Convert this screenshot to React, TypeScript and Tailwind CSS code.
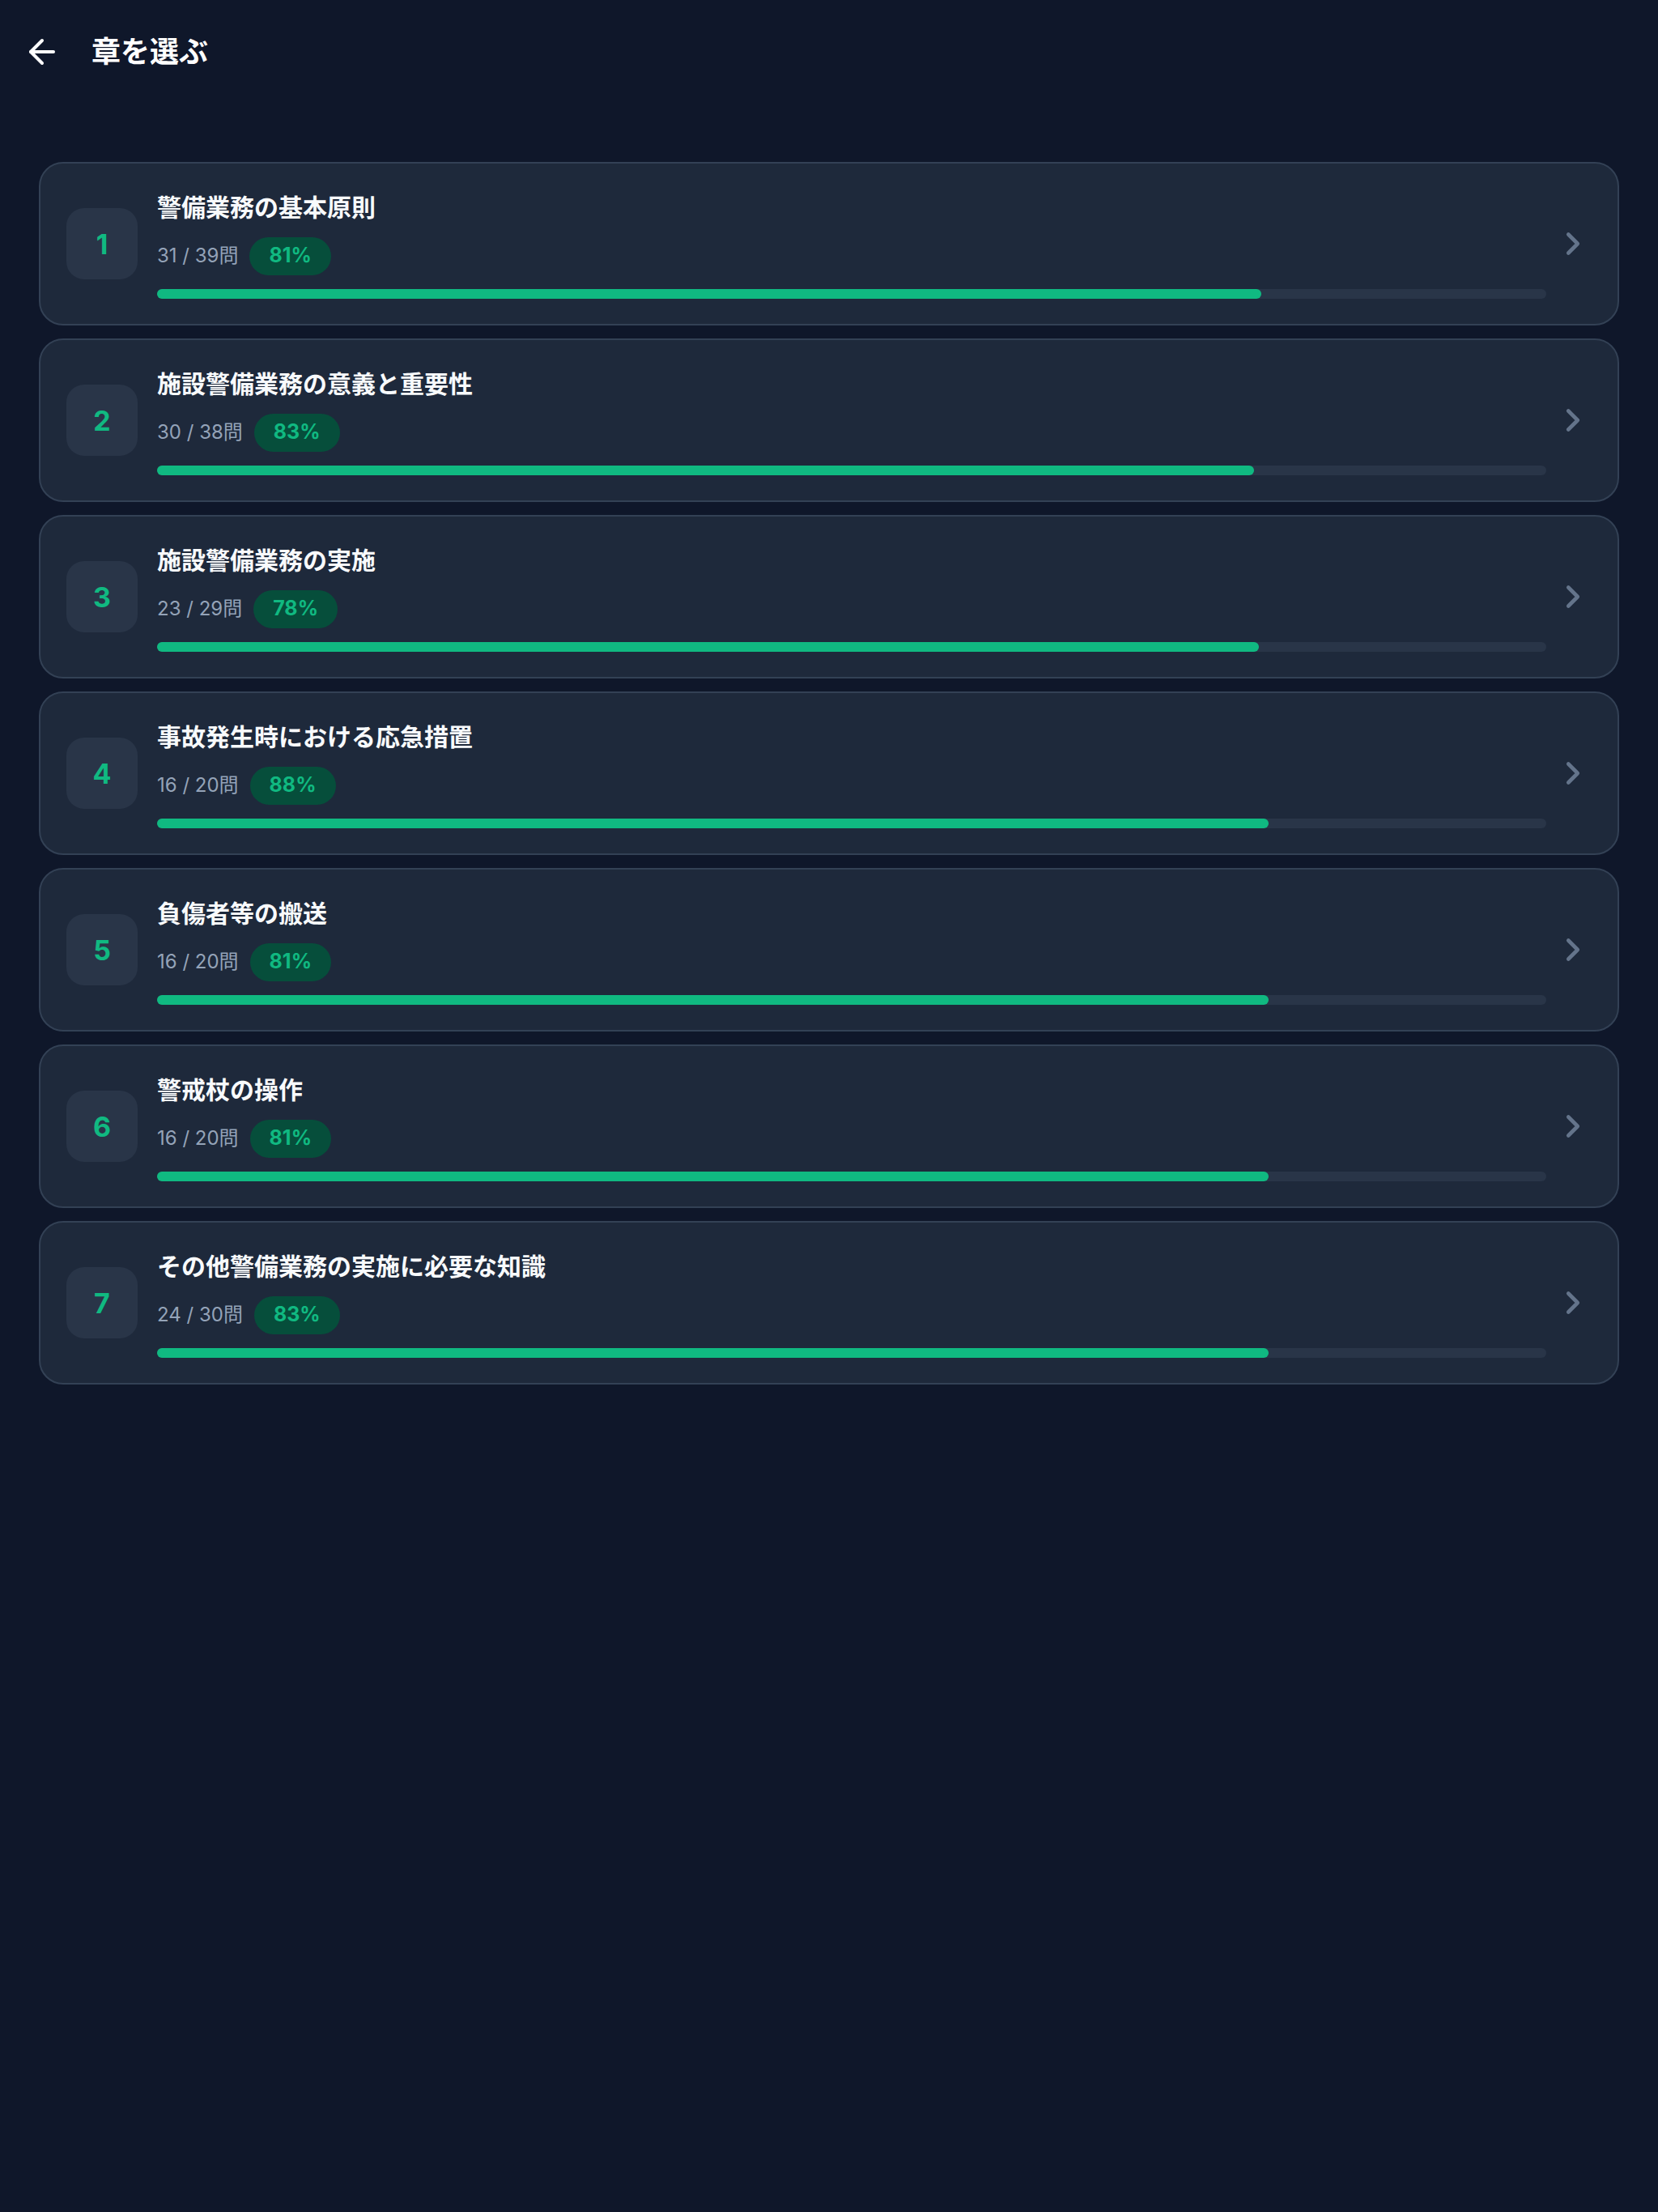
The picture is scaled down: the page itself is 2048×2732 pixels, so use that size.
import React from 'react';
import { ArrowLeft, ChevronRight } from 'lucide-react';

const chapters = [
	{ no: 1, title: '警備業務の基本原則', done: 31, total: 39, rate: 81 },
	{ no: 2, title: '施設警備業務の意義と重要性', done: 30, total: 38, rate: 83 },
	{ no: 3, title: '施設警備業務の実施', done: 23, total: 29, rate: 78 },
	{ no: 4, title: '事故発生時における応急措置', done: 16, total: 20, rate: 88 },
	{ no: 5, title: '負傷者等の搬送', done: 16, total: 20, rate: 81 },
	{ no: 6, title: '警戒杖の操作', done: 16, total: 20, rate: 81 },
	{ no: 7, title: 'その他警備業務の実施に必要な知識', done: 24, total: 30, rate: 83 },
];

function ChapterCard({ chapter }: { chapter: (typeof chapters)[number] }) {
	const progress = (chapter.done / chapter.total) * 100;
	return (
		<div className="flex h-[202px] items-center rounded-[30px] border-2 border-[#334155] bg-[#1e293b] px-[32px]">
			<div className="flex h-[88px] w-[88px] shrink-0 items-center justify-center rounded-[22px] bg-[#293548]">
				<span className="text-[34px] font-bold text-[#10b981]">{chapter.no}</span>
			</div>
			<div className="ml-[24px] flex min-w-0 flex-1 flex-col">
				<div className="text-[30px] font-bold leading-[45px] text-[#f8fafc]">
					{chapter.title}
				</div>
				<div className="mt-[14px] flex items-center gap-[14px]">
					<span className="text-[24px] text-[#94a3b8]">
						{chapter.done} / {chapter.total}問
					</span>
					<span className="flex h-[47px] items-center rounded-full bg-[#064e3b] px-[24px] text-[25px] font-bold text-[#10b981]">
						{chapter.rate}%
					</span>
				</div>
				<div className="mt-[17px] h-[12px] w-full rounded-full bg-[#293548]">
					<div
						className="h-full rounded-full bg-[#10b981]"
						style={{ width: `${progress}%` }}
					/>
				</div>
			</div>
			<ChevronRight
				size={46}
				strokeWidth={2.4}
				className="ml-[10px] shrink-0 text-[#64748b]"
			/>
		</div>
	);
}

export default function App() {
	return (
		<div
			className="min-h-screen bg-[#0f172a]"
			style={{ fontFamily: 'Inter, "Noto Sans CJK JP", sans-serif' }}
		>
			<header className="flex h-[128px] items-center px-[28px]">
				<ArrowLeft size={48} strokeWidth={2} className="text-white" />
				<h1 className="ml-[37px] text-[36px] font-bold text-white">章を選ぶ</h1>
			</header>
			<main className="flex flex-col gap-[16px] px-[48px] pt-[72px]">
				{chapters.map((c) => (
					<ChapterCard key={c.no} chapter={c} />
				))}
			</main>
		</div>
	);
}
